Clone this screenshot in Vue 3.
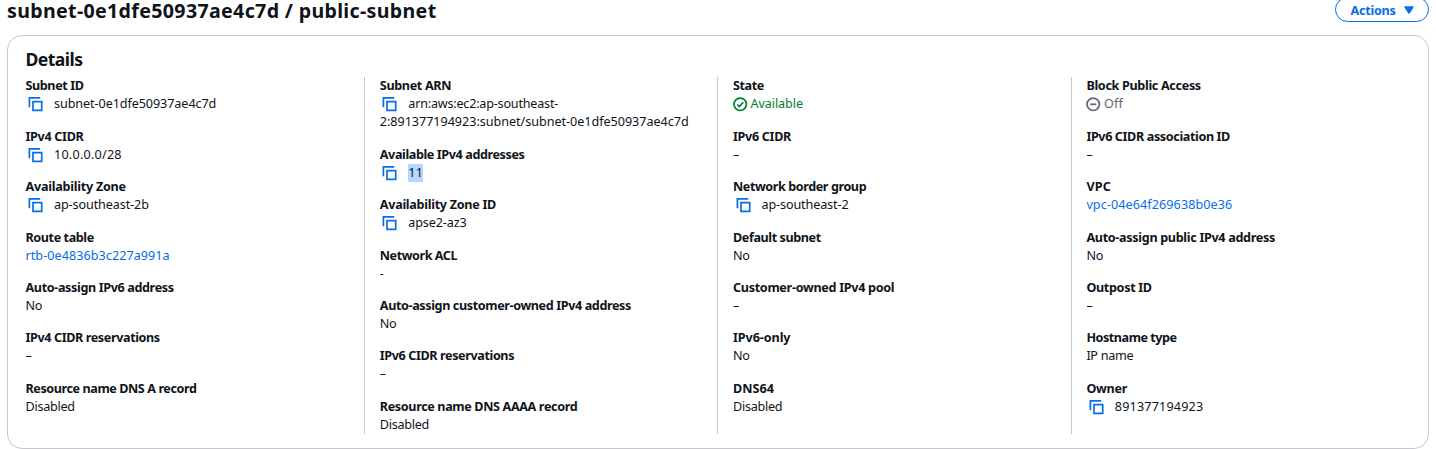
<script setup>
// Spreads the letters of a text so that it takes up the given width.
const vFit = {
  mounted(el, { value }) {
    if (!value) return
    const n = el.textContent.length
    el.style.letterSpacing = (value - el.getBoundingClientRect().width) / n + 'px'
  }
}

const columns = [
  [
    { label: 'Subnet ID', lw: 58, kind: 'copy', lines: [['subnet-0e1dfe50937ae4c7d', 162.3]] },
    { label: 'IPv4 CIDR', lw: 58, kind: 'copy', lines: [['10.0.0.0/28', 67.8]] },
    { label: 'Availability Zone', lw: 100.3, kind: 'copy', lines: [['ap-southeast-2b', 94.8]] },
    { label: 'Route table', lw: 68.3, kind: 'link', lines: [['rtb-0e4836b3c227a991a', 144.2]] },
    { label: 'Auto-assign IPv6 address', lw: 148.2, lines: [['No', 16.7]] },
    { label: 'IPv4 CIDR reservations', lw: 134.3, lines: [['–']] },
    { label: 'Resource name DNS A record', lw: 171, lines: [['Disabled', 49.3]] }
  ],
  [
    { label: 'Subnet ARN', lw: 71.3, kind: 'copy', lines: [['arn:aws:ec2:ap-southeast-', 149.8], ['2:891377194923:subnet/subnet-0e1dfe50937ae4c7d', 308.8]] },
    { label: 'Available IPv4 addresses', lw: 144.7, kind: 'copy', selected: true, lines: [['11', 15]] },
    { label: 'Availability Zone ID', lw: 116.2, kind: 'copy', lines: [['apse2-az3', 58.3]] },
    { label: 'Network ACL', lw: 77.3, lines: [['-']] },
    { label: 'Auto-assign customer-owned IPv4 address', lw: 251.2, lines: [['No', 16.7]] },
    { label: 'IPv6 CIDR reservations', lw: 134.3, lines: [['–']] },
    { label: 'Resource name DNS AAAA record', lw: 197.5, lines: [['Disabled', 49.3]] }
  ],
  [
    { label: 'State', lw: 31, kind: 'ok', lines: [['Available', 52.5]] },
    { label: 'IPv6 CIDR', lw: 58, lines: [['–']] },
    { label: 'Network border group', lw: 133.2, kind: 'copy', lines: [['ap-southeast-2', 87]] },
    { label: 'Default subnet', lw: 87.8, lines: [['No', 16.7]] },
    { label: 'Customer-owned IPv4 pool', lw: 161.3, lines: [['–']] },
    { label: 'IPv6-only', lw: 57.5, lines: [['No', 16.7]] },
    { label: 'DNS64', lw: 41, lines: [['Disabled', 49.3]] }
  ],
  [
    { label: 'Block Public Access', lw: 114.5, kind: 'off', lines: [['Off', 19.2]] },
    { label: 'IPv6 CIDR association ID', lw: 143.6, lines: [['–']] },
    { label: 'VPC', lw: 24.6, kind: 'link', lines: [['vpc-04e64f269638b0e36', 146]] },
    { label: 'Auto-assign public IPv4 address', lw: 188.6, lines: [['No', 16.7]] },
    { label: 'Outpost ID', lw: 65.3, lines: [['–']] },
    { label: 'Hostname type', lw: 90.3, lines: [['IP name', 47]] },
    { label: 'Owner', lw: 40.6, kind: 'copy', lines: [['891377194923', 88.5]] }
  ]
]
</script>

<template>
  <main class="page">
    <header class="head">
      <h1><span v-fit="429.5">subnet-0e1dfe50937ae4c7d / public-subnet</span></h1>
      <button class="actions">
        <span v-fit="45">Actions</span>
        <svg width="10" height="9" viewBox="0 0 10 9"><path d="M1 1h8L5 7z" /></svg>
      </button>
    </header>
    <section class="card">
      <h2><span v-fit="57">Details</span></h2>
      <div class="cols">
        <dl v-for="(col, c) in columns" :key="c" class="col">
          <div v-for="item in col" :key="item.label" class="item">
            <dt><span v-fit="item.lw">{{ item.label }}</span></dt>
            <dd v-for="(line, i) in item.lines" :key="i" :class="item.kind">
              <template v-if="i === 0">
                <svg v-if="item.kind === 'copy'" class="icon copy-icon" width="16" height="16" viewBox="0 0 16 16">
                  <path d="M1.4 11.2V1.9H12.2" />
                  <path d="M5 5.6h8.7v8.7H5z" />
                </svg>
                <svg v-else-if="item.kind === 'ok'" class="icon" width="15" height="16" viewBox="0 0 15 16">
                  <circle cx="7.2" cy="8.3" r="6.2" />
                  <path d="M4.2 8.5l2.1 2.1 4-4.4" />
                </svg>
                <svg v-else-if="item.kind === 'off'" class="icon" width="15" height="16" viewBox="0 0 15 16">
                  <circle cx="7.2" cy="8.3" r="6.2" />
                  <path d="M4.1 8.3h6.2" />
                </svg>
              </template>
              <span v-fit="line[1]" :class="{ selected: item.selected }">{{ line[0] }}</span>
            </dd>
          </div>
        </dl>
      </div>
    </section>
  </main>
</template>

<style>
body {
  background: #fff;
}
</style>

<style scoped>
.page {
  box-sizing: border-box;
  width: 1436px;
  height: 449px;
  padding: 0 7px;
  color: #0f141a;
  font-family: "Noto Sans", "Open Sans", sans-serif;
  font-size: 12.6px;
  line-height: 18px;
}
.head {
  display: flex;
  justify-content: space-between;
  height: 35px;
}
h1, h2, dl, dd {
  margin: 0;
}
h1 {
  font-size: 19.6px;
  line-height: 22px;
  font-weight: 700;
  white-space: nowrap;
}
.actions {
  box-sizing: border-box;
  display: flex;
  align-items: center;
  gap: 8px;
  width: 94px;
  height: 25px;
  margin-top: -3px;
  padding: 2px 0 0 14.5px;
  border: 1.5px solid #086de6;
  border-radius: 13px;
  background: #fff;
  color: #086de6;
  font: 700 12.6px/18px "Noto Sans", sans-serif;
}
.actions svg {
  fill: #086de6;
  stroke: #086de6;
  stroke-width: 1.4;
  stroke-linejoin: round;
}
.card {
  box-sizing: border-box;
  height: 414px;
  padding: 12px 0 0 17.5px;
  border: 1px solid #c6c6cd;
  border-radius: 15px;
}
h2 {
  height: 29px;
  font-size: 17.6px;
  line-height: 22px;
  font-weight: 700;
}
.cols {
  display: grid;
  grid-template-columns: 338.5px 353.2px 353.4px 353.5px;
  height: 357px;
}
.col {
  display: flex;
  flex-direction: column;
  gap: 14.4px;
  padding-top: 0.45px;
}
.col + .col {
  padding-left: 14.8px;
  border-left: 1px solid #c6c6cd;
}
dt {
  font-weight: 700;
}
dt, dd {
  display: flex;
  height: 18px;
  white-space: pre;
}
.icon {
  flex: none;
  margin: 1px 2.5px 0 0;
  fill: none;
  stroke: currentColor;
  stroke-width: 1.7;
}
.copy-icon {
  margin: 1px 9.8px 0 2.7px;
  stroke: #086de6;
}
.link {
  color: #086de6;
}
.ok {
  color: #00802f;
}
.off {
  color: #656871;
}
.selected {
  background: #b3d7ff;
}
</style>
